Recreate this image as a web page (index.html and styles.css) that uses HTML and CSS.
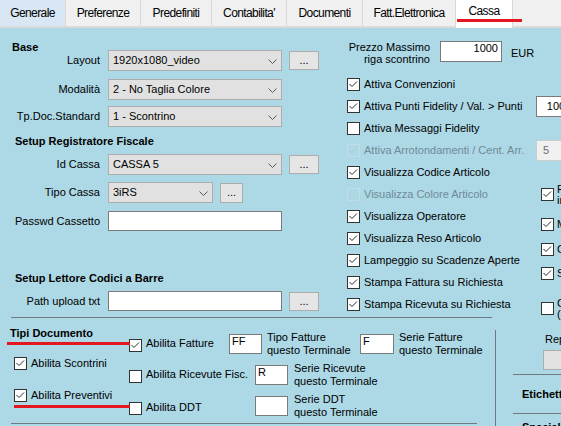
FILE: index.html
```html
<!DOCTYPE html>
<html lang="it">
<head>
<meta charset="utf-8">
<title>Cassa</title>
<link rel="stylesheet" href="styles.css">
</head>
<body>
<div class="tabs">
  <div class="tab hot w66">Generale</div>
  <div class="tab w75">Preferenze</div>
  <div class="tab w71">Predefiniti</div>
  <div class="tab w75">Contabilita'</div>
  <div class="tab w76">Documenti</div>
  <div class="tab w93">Fatt.Elettronica</div>
  <div class="tab sel w57">Cassa</div>
  <div class="tab rest"></div>
  <span class="mark mark-tab"></span>
</div>

<div class="page">
  <div class="top">
    <div class="left">
      <div class="hdr hdr-base">Base</div>
      <div class="row">
        <div class="lbl">Layout</div>
        <div class="combo"><span>1920x1080_video</span><svg class="chev" viewBox="0 0 9 5"><polyline points="0.5,0.5 4.5,4.5 8.5,0.5"/></svg></div>
        <div class="btn">...</div>
      </div>
      <div class="row g8">
        <div class="lbl">Modalità</div>
        <div class="combo"><span>2 - No Taglia Colore</span><svg class="chev" viewBox="0 0 9 5"><polyline points="0.5,0.5 4.5,4.5 8.5,0.5"/></svg></div>
      </div>
      <div class="row g6">
        <div class="lbl">Tp.Doc.Standard</div>
        <div class="combo"><span>1 - Scontrino</span><svg class="chev" viewBox="0 0 9 5"><polyline points="0.5,0.5 4.5,4.5 8.5,0.5"/></svg></div>
      </div>
      <div class="hdr hdr-sec g8">Setup Registratore Fiscale</div>
      <div class="row">
        <div class="lbl">Id Cassa</div>
        <div class="combo"><span>CASSA 5</span><svg class="chev" viewBox="0 0 9 5"><polyline points="0.5,0.5 4.5,4.5 8.5,0.5"/></svg></div>
        <div class="btn">...</div>
      </div>
      <div class="row g7">
        <div class="lbl">Tipo Cassa</div>
        <div class="combo short"><span>3iRS</span><svg class="chev" viewBox="0 0 9 5"><polyline points="0.5,0.5 4.5,4.5 8.5,0.5"/></svg></div>
        <div class="btn small">...</div>
      </div>
      <div class="row trow g8">
        <div class="lbl">Passwd Cassetto</div>
        <div class="txt"></div>
      </div>
      <div class="hdr hdr-sec g41">Setup Lettore Codici a Barre</div>
      <div class="row trow">
        <div class="lbl">Path upload txt</div>
        <div class="txt"></div>
        <div class="btn">...</div>
      </div>
    </div>

    <div class="mid">
      <div class="prezzo">
        <div class="prezzo-lbl">Prezzo Massimo<br>riga scontrino</div>
        <div class="txt price">1000</div>
        <div class="eur">EUR</div>
      </div>
      <div class="cols">
        <div class="cblist">
          <div class="cbrow"><span class="cb"><svg viewBox="0 0 11 11"><path d="M1.5 5L4 7.5L9 2.5"/></svg></span><span>Attiva Convenzioni</span></div>
          <div class="cbrow"><span class="cb"><svg viewBox="0 0 11 11"><path d="M1.5 5L4 7.5L9 2.5"/></svg></span><span class="fixw">Attiva Punti Fidelity / Val. &gt; Punti</span><span class="num">100</span></div>
          <div class="cbrow"><span class="cb"></span><span>Attiva Messaggi Fidelity</span></div>
          <div class="cbrow"><span class="cb dis"><svg viewBox="0 0 11 11"><path d="M1.5 5L4 7.5L9 2.5"/></svg></span><span class="fixw dis-t">Attiva Arrotondamenti / Cent. Arr.</span><span class="num dis">5</span></div>
          <div class="cbrow"><span class="cb"><svg viewBox="0 0 11 11"><path d="M1.5 5L4 7.5L9 2.5"/></svg></span><span>Visualizza Codice Articolo</span></div>
          <div class="cbrow"><span class="cb dis"><svg viewBox="0 0 11 11"><path d="M1.5 5L4 7.5L9 2.5"/></svg></span><span class="dis-t">Visualizza Colore Articolo</span></div>
          <div class="cbrow"><span class="cb"><svg viewBox="0 0 11 11"><path d="M1.5 5L4 7.5L9 2.5"/></svg></span><span>Visualizza Operatore</span></div>
          <div class="cbrow"><span class="cb"><svg viewBox="0 0 11 11"><path d="M1.5 5L4 7.5L9 2.5"/></svg></span><span>Visualizza Reso Articolo</span></div>
          <div class="cbrow"><span class="cb"><svg viewBox="0 0 11 11"><path d="M1.5 5L4 7.5L9 2.5"/></svg></span><span>Lampeggio su Scadenze Aperte</span></div>
          <div class="cbrow"><span class="cb"><svg viewBox="0 0 11 11"><path d="M1.5 5L4 7.5L9 2.5"/></svg></span><span>Stampa Fattura su Richiesta</span></div>
          <div class="cbrow"><span class="cb"><svg viewBox="0 0 11 11"><path d="M1.5 5L4 7.5L9 2.5"/></svg></span><span>Stampa Ricevuta su Richiesta</span></div>
        </div>
        <div class="far">
          <div class="frow f1"><span class="cb"><svg viewBox="0 0 11 11"><path d="M1.5 5L4 7.5L9 2.5"/></svg></span><span class="two">Fattura<br>immediata</span></div>
          <div class="frow f2"><span class="cb"><svg viewBox="0 0 11 11"><path d="M1.5 5L4 7.5L9 2.5"/></svg></span><span>Mostra</span></div>
          <div class="frow f3"><span class="cb"><svg viewBox="0 0 11 11"><path d="M1.5 5L4 7.5L9 2.5"/></svg></span><span>Chiedi</span></div>
          <div class="frow f4"><span class="cb"><svg viewBox="0 0 11 11"><path d="M1.5 5L4 7.5L9 2.5"/></svg></span><span>Stampa</span></div>
          <div class="frow f5"><span class="cb"></span><span class="two">Calcola<br>(sconto)</span></div>
        </div>
      </div>
    </div>
  </div>

  <div class="bottom">
    <div class="bl">
      <div class="hl hl-top"></div>
      <div class="docs">
        <div class="colA">
          <div class="tipi">Tipi Documento</div>
          <div class="arow arow1"><span class="cb"><svg viewBox="0 0 11 11"><path d="M1.5 5L4 7.5L9 2.5"/></svg></span><span>Abilita Scontrini</span></div>
          <div class="arow arow2"><span class="cb"><svg viewBox="0 0 11 11"><path d="M1.5 5L4 7.5L9 2.5"/></svg></span><span>Abilita Preventivi</span></div>
        </div>
        <div class="colB">
          <div class="brow brow1">
            <span class="cb"><svg viewBox="0 0 11 11"><path d="M1.5 5L4 7.5L9 2.5"/></svg></span>
            <span class="alb w83">Abilita Fatture</span>
            <div class="txt sm">FF</div>
            <div class="ml w93">Tipo Fatture<br>questo Terminale</div>
            <div class="txt sm w34">F</div>
            <div class="ml">Serie Fatture<br>questo Terminale</div>
          </div>
          <div class="brow brow2">
            <span class="cb"></span>
            <span class="alb w109">Abilita Ricevute Fisc.</span>
            <div class="txt sm">R</div>
            <div class="ml ml6">Serie Ricevute<br>questo Terminale</div>
          </div>
          <div class="brow brow3">
            <span class="cb"></span>
            <span class="alb w109">Abilita DDT</span>
            <div class="txt sm"></div>
            <div class="ml ml6">Serie DDT<br>questo Terminale</div>
          </div>
        </div>
      </div>
      <div class="hl hl-bot"></div>
    </div>
    <div class="vl"></div>
    <div class="br">
      <div class="rep">Reparto</div>
      <div class="rbtn"></div>
      <div class="hl hl-r"></div>
      <div class="bh bh1">Etichette</div>
      <div class="hl hl-r2"></div>
      <div class="bh bh2">Speciali</div>
    </div>
  </div>

  <span class="mark mark-1"></span>
  <span class="mark mark-2"></span>
</div>
</body>
</html>
```

FILE: styles.css
```css
html, body {
  margin: 0;
  padding: 0;
}
body {
  width: 561px;
  height: 426px;
  overflow: hidden;
  font-family: "Liberation Sans", Arial, sans-serif;
  font-size: 11px;
  color: #000;
  background: #add8e6;
}

/* ---------- tabs ---------- */
.tabs {
  display: flex;
  height: 28px;
  position: relative;
  background: #fff;
}
.tab {
  box-sizing: border-box;
  flex: none;
  height: 28px;
  border-right: 1px solid #d9d9d9;
  border-bottom: 2px solid #dadada;
  background: #f0f0f0;
  text-align: center;
  line-height: 26px;
  font-family: "Liberation Sans", Arial, sans-serif;
  font-size: 12px;
  letter-spacing: -0.6px;
  white-space: nowrap;
}
.tab.hot { background: #d9e7f4; }
.tab.sel {
  background: #fff;
  border-bottom: 0;
  line-height: 22px;
}
.tab.rest { flex: 1; border-right: 0; }
.w66 { width: 66px; }
.w75 { width: 75px; }
.w71 { width: 71px; }
.w76 { width: 76px; }
.w93 { width: 93px; }
.w57 { width: 57px; }

.mark {
  position: absolute;
  height: 3px;
  background: #e3171f;
}
.mark-tab { left: 457px; top: 19px; width: 65px; }
.mark-1 { left: 7px; top: 314px; width: 123px; }
.mark-2 { left: 14px; top: 377px; width: 116px; }

/* ---------- page ---------- */
.page {
  position: relative;
  height: 398px;
}
.top {
  display: flex;
  height: 289px;
}
.left {
  width: 340px;
  flex: none;
  box-sizing: border-box;
  padding-top: 13px;
}
.hdr {
  font-weight: bold;
  line-height: 13px;
  white-space: nowrap;
}
.hdr-base { margin-left: 12px; height: 9px; }
.hdr-sec { margin-left: 15px; height: 19px; }
.g6 { margin-top: 6px; }
.g7 { margin-top: 7px; }
.g8 { margin-top: 8px; }
.g41 { margin-top: 41px; }

.row {
  display: flex;
  align-items: flex-start;
  height: 21px;
}
.row.trow { height: 20px; }
.lbl {
  flex: none;
  width: 108px;
  box-sizing: border-box;
  padding: 4px 8px 0 0;
  text-align: right;
  line-height: 13px;
  white-space: nowrap;
}
.combo {
  flex: none;
  display: flex;
  justify-content: space-between;
  width: 174px;
  height: 21px;
  box-sizing: border-box;
  border: 1px solid #adadad;
  background: #e1e1e1;
  padding: 3px 4px 0 4px;
  line-height: 13px;
  white-space: nowrap;
}
.combo.short { width: 105px; }
.chev {
  width: 9px;
  height: 5px;
  margin-top: 5px;
  fill: none;
  stroke: #5a5a5a;
  stroke-width: 1;
}
.btn {
  flex: none;
  width: 30px;
  height: 19px;
  margin: 1px 0 0 7px;
  box-sizing: border-box;
  border: 1px solid #adadad;
  background: #e5e5e5;
  text-align: center;
  line-height: 13px;
  padding-top: 2px;
}
.btn.small { width: 23px; height: 20px; }
.txt {
  flex: none;
  width: 174px;
  height: 20px;
  box-sizing: border-box;
  border: 1px solid #7a7a7a;
  background: #fff;
  line-height: 12px;
  padding: 0 2px;
  white-space: nowrap;
}

/* ---------- middle column ---------- */
.mid {
  flex: 1;
  min-width: 0;
}
.prezzo {
  display: flex;
  margin-top: 13px;
  height: 21px;
}
.prezzo-lbl {
  flex: none;
  width: 90px;
  text-align: right;
  line-height: 12px;
  white-space: nowrap;
}
.txt.price {
  width: 62px;
  height: 21px;
  margin-left: 10px;
  text-align: right;
  padding-right: 3px;
}
.eur {
  margin: 6px 0 0 9px;
  line-height: 13px;
}
.cols {
  display: flex;
  margin-top: 11px;
}
.cblist {
  flex: none;
  width: 201px;
  box-sizing: border-box;
  padding-left: 7px;
}
.cbrow {
  display: flex;
  align-items: center;
  gap: 4px;
  height: 22px;
  line-height: 13px;
  white-space: nowrap;
}
.cb {
  flex: none;
  width: 13px;
  height: 13px;
  box-sizing: border-box;
  border: 1px solid #333;
  background: #fff;
  color: #2b2b2b;
}
.cb svg {
  display: block;
  width: 11px;
  height: 11px;
  fill: none;
  stroke: currentColor;
  stroke-width: 1;
}
.cb.dis {
  border-color: #c3dbe3;
  background: transparent;
  color: #b3ccd5;
}
.dis-t { color: #6f8b97; }
.fixw { width: 168px; flex: none; }
.num {
  flex: none;
  width: 40px;
  height: 21px;
  box-sizing: border-box;
  border: 1px solid #7a7a7a;
  background: #fff;
  line-height: 19px;
  text-align: center;
}
.num.dis {
  background: #f0f0f0;
  border-color: #cccccc;
  color: #6d6d6d;
  text-align: left;
  padding-left: 6px;
}
.far {
  flex: none;
  width: 80px;
}
.frow {
  display: flex;
  align-items: center;
  gap: 3px;
  height: 13px;
  line-height: 13px;
  white-space: nowrap;
}
.frow .two { line-height: 11px; }
.f1 { margin-top: 115px; }
.f2 { margin-top: 17px; }
.f3 { margin-top: 12px; }
.f4 { margin-top: 11px; }
.f5 { margin-top: 22px; }

/* ---------- bottom ---------- */
.bottom {
  display: flex;
  height: 109px;
}
.bl {
  flex: none;
  width: 495px;
}
.hl {
  height: 1px;
  background: #6f7a80;
}
.hl-top { margin-left: 11px; width: 481px; }
.hl-bot { margin: 7px 0 0 11px; width: 466px; }
.docs {
  display: flex;
  height: 98px;
}
.colA {
  flex: none;
  width: 129px;
}
.tipi {
  margin: 9px 0 0 10px;
  line-height: 13px;
  font-weight: bold;
  white-space: nowrap;
}
.arow {
  display: flex;
  align-items: center;
  gap: 4px;
  height: 22px;
  padding-left: 14px;
  line-height: 13px;
  white-space: nowrap;
}
.arow1 { margin-top: 12px; }
.arow2 { margin-top: 10px; }
.colB { flex: 1; }
.brow {
  display: flex;
  align-items: flex-start;
  height: 20px;
}
.brow1 { margin-top: 16px; }
.brow2, .brow3 { margin-top: 11px; }
.brow .cb { margin-top: 5px; }
.brow3 .cb { margin-top: 6px; }
.alb {
  flex: none;
  margin: 3px 0 0 4px;
  line-height: 13px;
  white-space: nowrap;
}
.brow3 .alb { margin-top: 5px; }
.w83 { width: 83px; }
.w109 { width: 109px; }
.txt.sm { width: 33px; height: 20px; }
.txt.sm.w34 { width: 34px; }
.ml {
  flex: none;
  margin: -3px 0 0 5px;
  line-height: 13px;
  white-space: nowrap;
}
.ml.ml6 { margin-left: 6px; }
.w93 { width: 93px; }
.vl {
  flex: none;
  width: 1px;
  margin-top: 13px;
  background: #6f7a80;
}
.br {
  flex: 1;
  white-space: nowrap;
}
.rep {
  margin: 16px 0 0 49px;
  line-height: 13px;
}
.rbtn {
  margin: 4px 0 0 47px;
  width: 60px;
  height: 20px;
  box-sizing: border-box;
  border: 1px solid #adadad;
  background: #e1e1e1;
}
.hl-r { margin: 4px 0 0 17px; }
.hl-r2 { margin: 12px 0 0 17px; }
.bh {
  margin-left: 26px;
  font-weight: bold;
  line-height: 13px;
}
.bh1 { margin-top: 13px; }
.bh2 { margin-top: 7px; }
```
